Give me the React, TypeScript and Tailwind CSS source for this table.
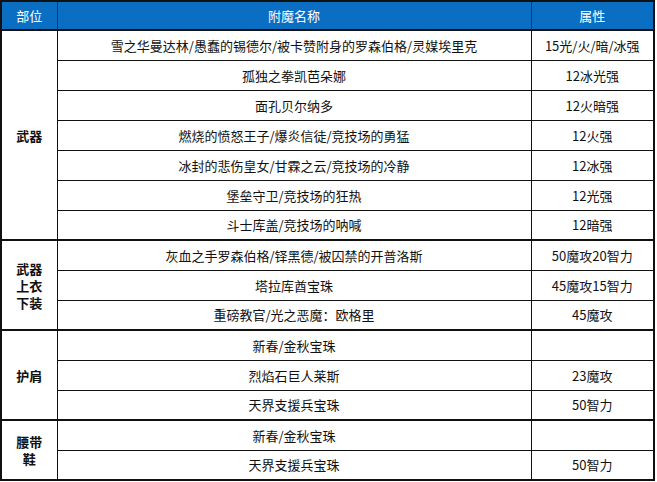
import React from 'react';

type Row = { name: string; attr: string };
type Group = { part: string[]; rows: Row[] };

const groups: Group[] = [
  {
    part: ['武器'],
    rows: [
      { name: '雪之华曼达林/愚蠢的锡德尔/被卡赞附身的罗森伯格/灵媒埃里克', attr: '15光/火/暗/冰强' },
      { name: '孤独之拳凯芭朵娜', attr: '12冰光强' },
      { name: '面孔贝尔纳多', attr: '12火暗强' },
      { name: '燃烧的愤怒王子/爆炎信徒/竞技场的勇猛', attr: '12火强' },
      { name: '冰封的悲伤皇女/甘霖之云/竞技场的冷静', attr: '12冰强' },
      { name: '堡垒守卫/竞技场的狂热', attr: '12光强' },
      { name: '斗士库盖/竞技场的呐喊', attr: '12暗强' },
    ],
  },
  {
    part: ['武器', '上衣', '下装'],
    rows: [
      { name: '灰血之手罗森伯格/铎黑德/被囚禁的开普洛斯', attr: '50魔攻20智力' },
      { name: '塔拉库酋宝珠', attr: '45魔攻15智力' },
      { name: '重磅教官/光之恶魔：欧格里', attr: '45魔攻' },
    ],
  },
  {
    part: ['护肩'],
    rows: [
      { name: '新春/金秋宝珠', attr: '' },
      { name: '烈焰石巨人莱斯', attr: '23魔攻' },
      { name: '天界支援兵宝珠', attr: '50智力' },
    ],
  },
  {
    part: ['腰带', '鞋'],
    rows: [
      { name: '新春/金秋宝珠', attr: '' },
      { name: '天界支援兵宝珠', attr: '50智力' },
    ],
  },
];

const App: React.FC = () => {
  return (
    <div className="w-[657px] h-[482px] overflow-hidden bg-white font-['Noto_Sans_CJK_SC','Microsoft_YaHei',sans-serif] text-[13px] text-[#111]">
      <table className="w-[655px] border-collapse table-fixed border-2 border-[#111]">
        <colgroup>
          <col className="w-[56px]" />
          <col className="w-[474px]" />
          <col />
        </colgroup>
        <thead>
          <tr className="h-[29px] bg-[#0a6fc2] text-white">
            <th className="font-normal border border-[#1d3550] p-0">部位</th>
            <th className="font-normal border border-[#1d3550] p-0">附魔名称</th>
            <th className="font-normal border border-[#1d3550] p-0">属性</th>
          </tr>
        </thead>
        <tbody>
          {groups.map((g, gi) =>
            g.rows.map((r, ri) => (
              <tr key={`${gi}-${ri}`} className="h-[30px]">
                {ri === 0 && (
                  <td
                    rowSpan={g.rows.length}
                    className="border border-[#111] border-t-2 text-center font-bold leading-[17px] p-0"
                  >
                    {g.part.map((p, pi) => (
                      <React.Fragment key={p}>
                        {pi > 0 && <br />}
                        {p}
                      </React.Fragment>
                    ))}
                  </td>
                )}
                <td className={`border border-[#111] text-center leading-none p-0 ${ri === 0 ? 'border-t-2' : ''}`}>{r.name}</td>
                <td className={`border border-[#111] text-center leading-none p-0 ${ri === 0 ? 'border-t-2' : ''}`}>{r.attr}</td>
              </tr>
            ))
          )}
        </tbody>
      </table>
    </div>
  );
};

export default App;
